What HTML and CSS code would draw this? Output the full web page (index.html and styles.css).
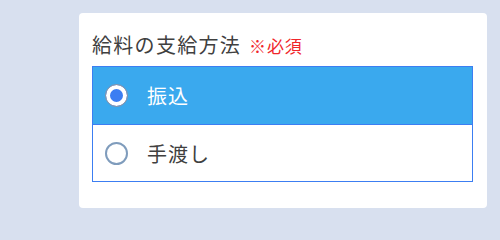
FILE: index.html
```html
<!DOCTYPE html>
<html lang="ja">
<head>
<meta charset="utf-8">
<link rel="stylesheet" href="styles.css">
</head>
<body>
<div class="card">
  <div class="title">給料の支給方法<span class="req">※必須</span></div>
  <div class="group">
    <label class="option selected">
      <span class="radio"></span>
      <span class="label">振込</span>
    </label>
    <label class="option">
      <span class="radio"></span>
      <span class="label">手渡し</span>
    </label>
  </div>
</div>
</body>
</html>
```

FILE: styles.css
```css
html, body {
  margin: 0;
  padding: 0;
}
body {
  background: #d8e0ef;
  width: 500px;
  height: 222px;
  padding: 13px 0 0 79px;
  box-sizing: border-box;
  font-family: "Noto Sans CJK JP", "Noto Sans", sans-serif;
}
.card {
  width: 408px;
  height: 195px;
  box-sizing: border-box;
  background: #ffffff;
  border-radius: 4px;
  padding: 18px 14px 0 13px;
}
.title {
  font-size: 20px;
  line-height: 28px;
  color: #404040;
  letter-spacing: 1.3px;
  margin-bottom: 6px;
  display: flex;
  align-items: baseline;
}
.req {
  color: #f0262b;
  font-size: 17px;
  margin-left: 8px;
  letter-spacing: 0.8px;
}
.group {
  border: 1.5px solid #3c7ef2;
  display: flex;
  flex-direction: column;
}
.option {
  height: 57px;
  display: flex;
  align-items: center;
  padding-left: 12px;
  box-sizing: border-box;
  background: #ffffff;
}
.option + .option {
  border-top: 1px solid #3c7ef2;
}
.option.selected {
  background: #3aa9ee;
}
.radio {
  width: 23px;
  height: 23px;
  box-sizing: border-box;
  border-radius: 50%;
  border: 2px solid #7f9cbc;
  background: #ffffff;
  flex: none;
}
.option.selected .radio {
  border: 1px solid #8f97a3;
  background: #3c7ef2;
  box-shadow: inset 0 0 0 4px #ffffff;
}
.label {
  margin-left: 19px;
  font-size: 20px;
  color: #404040;
  letter-spacing: 1px;
}
.option.selected .label {
  color: #ffffff;
}
```
